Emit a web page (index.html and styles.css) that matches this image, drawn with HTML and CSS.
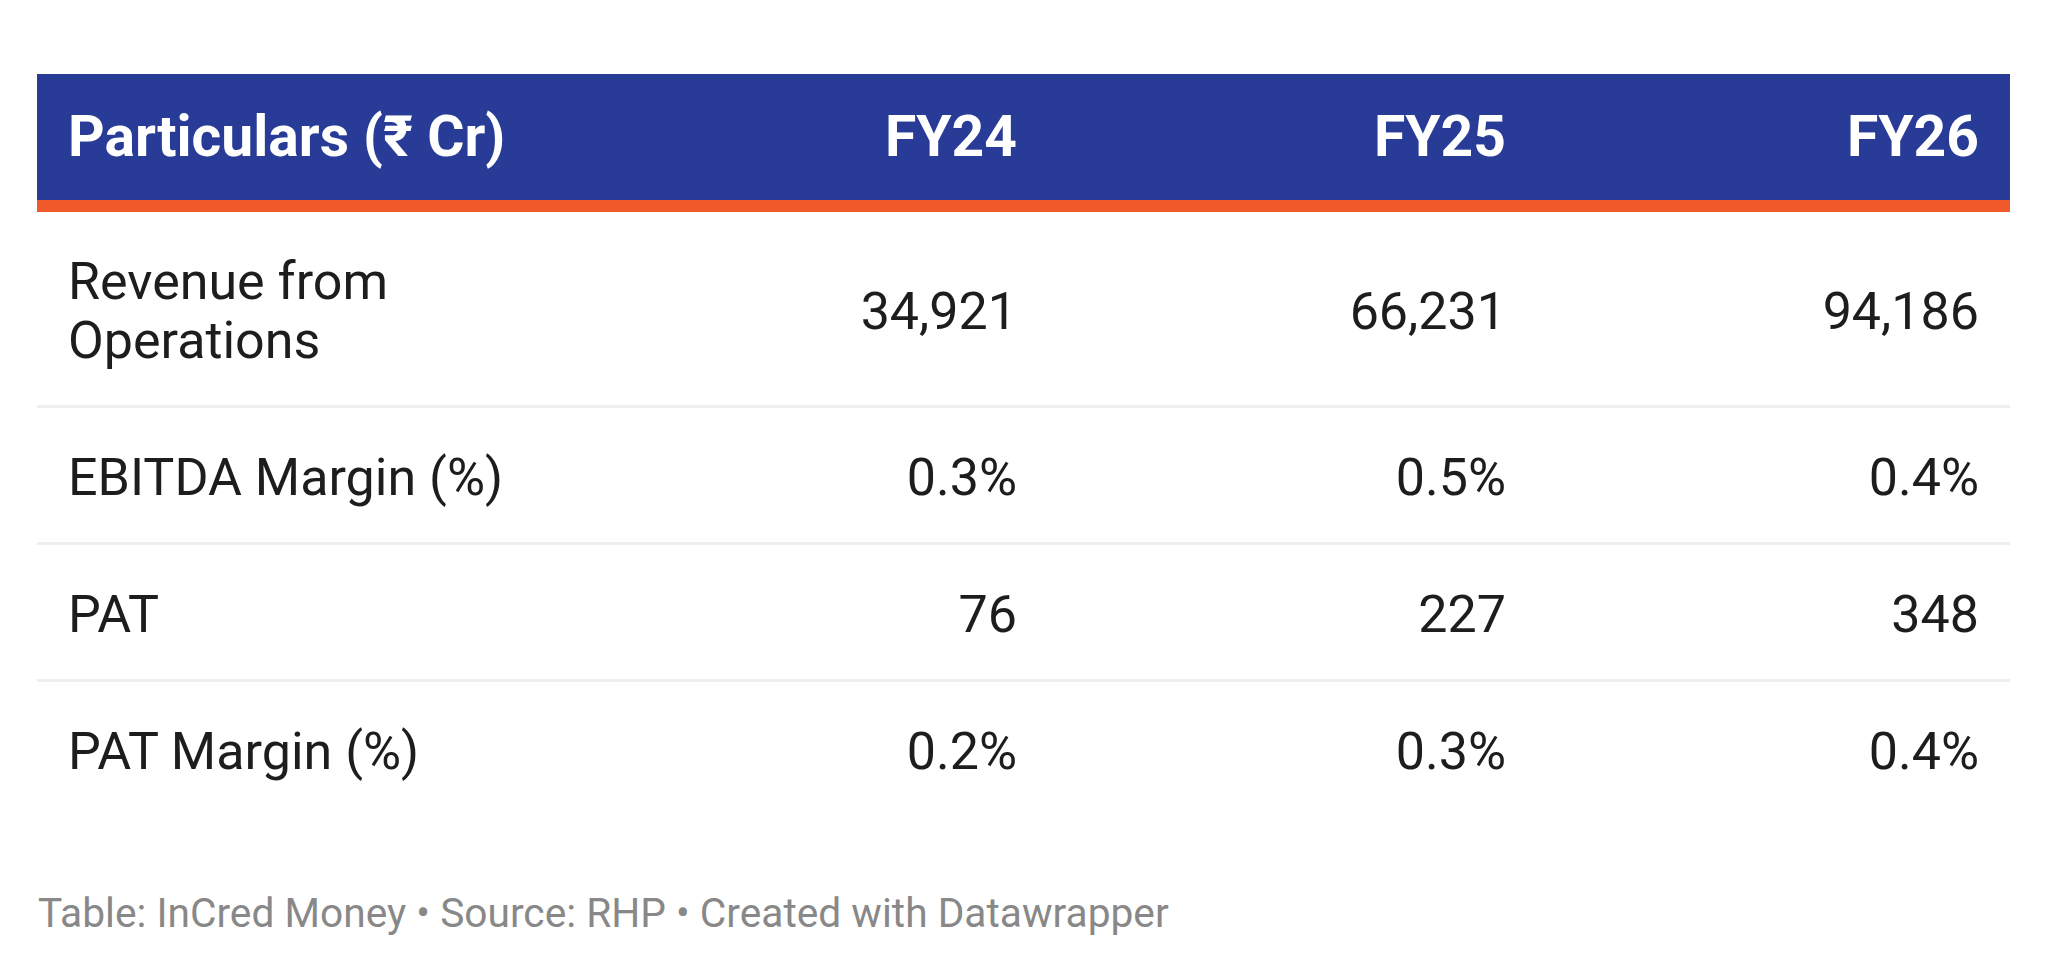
FILE: index.html
```html
<!DOCTYPE html>
<html lang="en">
<head>
<meta charset="utf-8">
<title>Financials</title>
<link rel="stylesheet" href="styles.css">
</head>
<body>
<div class="wrap">
  <div class="table">
    <div class="row head">
      <div class="cell first">Particulars (₹ Cr)</div>
      <div class="cell num">FY24</div>
      <div class="cell num">FY25</div>
      <div class="cell num">FY26</div>
    </div>
    <div class="row body">
      <div class="cell first">Revenue from<br>Operations</div>
      <div class="cell num">34,921</div>
      <div class="cell num">66,231</div>
      <div class="cell num">94,186</div>
    </div>
    <div class="row body">
      <div class="cell first">EBITDA Margin (%)</div>
      <div class="cell num">0.3%</div>
      <div class="cell num">0.5%</div>
      <div class="cell num">0.4%</div>
    </div>
    <div class="row body">
      <div class="cell first">PAT</div>
      <div class="cell num">76</div>
      <div class="cell num">227</div>
      <div class="cell num">348</div>
    </div>
    <div class="row body last">
      <div class="cell first">PAT Margin (%)</div>
      <div class="cell num">0.2%</div>
      <div class="cell num">0.3%</div>
      <div class="cell num">0.4%</div>
    </div>
  </div>
  <div class="footer">Table: InCred Money • Source: RHP • Created with Datawrapper</div>
</div>
</body>
</html>
```

FILE: styles.css
```css
html, body {
  margin: 0;
  padding: 0;
  background: #ffffff;
}

body {
  font-family: Roboto, "Liberation Sans", Arial, sans-serif;
  color: #1d1d1d;
}

.wrap {
  padding: 74px 38px 0 37px;
}

.row {
  display: grid;
  grid-template-columns: 522px 489px 489px 1fr;
  align-items: center;
}

.cell {
  padding: 0 31px;
}

.num {
  text-align: right;
}

.head {
  background: #283b96;
  color: #ffffff;
  font-weight: 700;
  font-size: 57px;
  height: 126px;
  border-bottom: 12px solid #f05a2b;
  line-height: 1.17;
}

.body {
  font-size: 52px;
  line-height: 59px;
  padding: 40px 0 35px;
  border-bottom: 3px solid #eeeeee;
}

.body.last {
  border-bottom: none;
}

.footer {
  margin-top: 73px;
  font-size: 40.7px;
  line-height: 1.2;
  color: #888888;
  padding-left: 1px;
}
```
